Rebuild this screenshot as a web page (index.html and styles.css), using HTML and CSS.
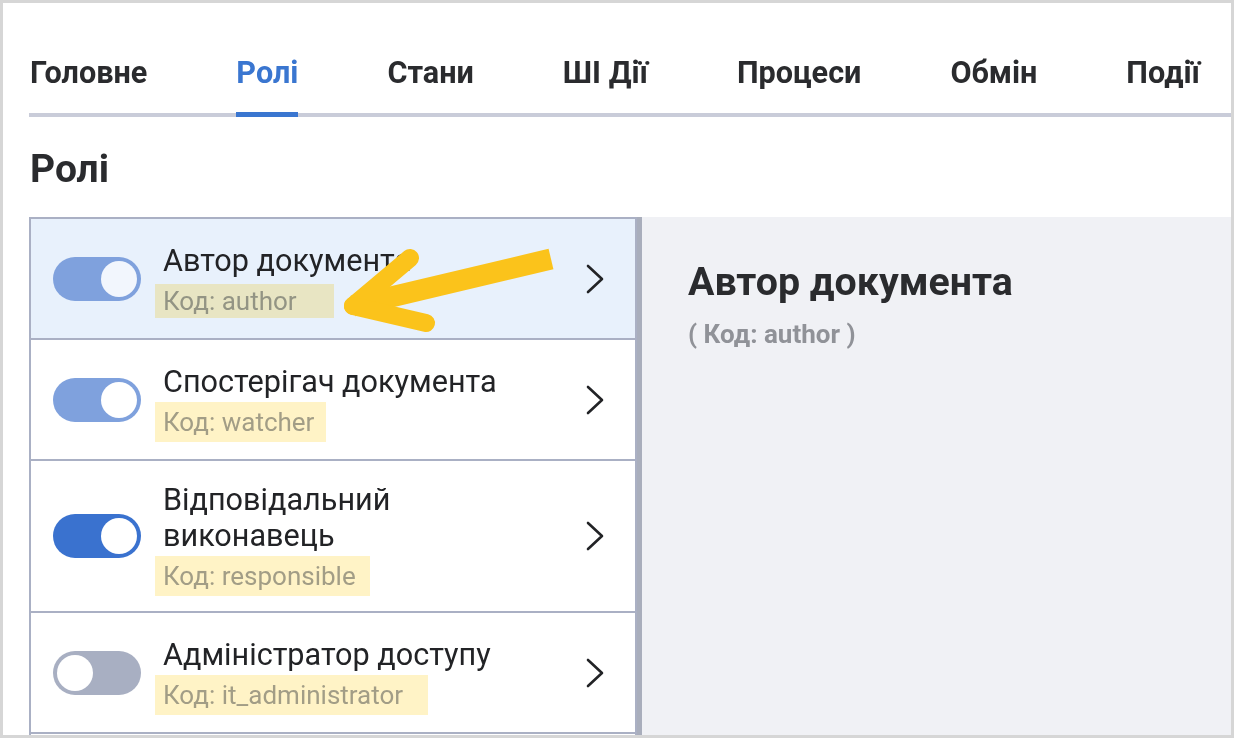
FILE: index.html
```html
<!DOCTYPE html>
<html lang="uk">
<head>
<meta charset="utf-8">
<title>Ролі</title>
<link rel="stylesheet" href="styles.css">
</head>
<body>
<div class="frame">
  <nav class="tabs">
    <div class="tab">Головне</div>
    <div class="tab active">Ролі</div>
    <div class="tab">Стани</div>
    <div class="tab">ШІ Дії</div>
    <div class="tab">Процеси</div>
    <div class="tab">Обмін</div>
    <div class="tab">Події</div>
  </nav>
  <h1 class="heading">Ролі</h1>
  <div class="main">
    <ul class="roles">
      <li class="role selected">
        <span class="toggle on-soft"><span class="knob"></span></span>
        <div class="info">
          <div class="title">Автор документа</div>
          <div class="code"><span class="hl hl-1">Код: author</span></div>
        </div>
        <svg class="chev" viewBox="0 0 20 30"><polyline points="3,2 17,15 3,28"/></svg>
      </li>
      <li class="role">
        <span class="toggle on-soft"><span class="knob"></span></span>
        <div class="info">
          <div class="title">Спостерігач документа</div>
          <div class="code"><span class="hl hl-2">Код: watcher</span></div>
        </div>
        <svg class="chev" viewBox="0 0 20 30"><polyline points="3,2 17,15 3,28"/></svg>
      </li>
      <li class="role tall">
        <span class="toggle on-strong"><span class="knob"></span></span>
        <div class="info">
          <div class="title">Відповідальний<br>виконавець</div>
          <div class="code"><span class="hl hl-3">Код: responsible</span></div>
        </div>
        <svg class="chev" viewBox="0 0 20 30"><polyline points="3,2 17,15 3,28"/></svg>
      </li>
      <li class="role">
        <span class="toggle off"><span class="knob"></span></span>
        <div class="info">
          <div class="title">Адміністратор доступу</div>
          <div class="code"><span class="hl hl-4">Код: it_administrator</span></div>
        </div>
        <svg class="chev" viewBox="0 0 20 30"><polyline points="3,2 17,15 3,28"/></svg>
      </li>
    </ul>
    <section class="detail">
      <h2 class="detail-title">Автор документа</h2>
      <div class="detail-code">( Код: author )</div>
    </section>
  </div>
  <svg class="arrow" viewBox="0 0 1234 738" width="1234" height="738">
    <line x1="353" y1="306" x2="551" y2="259" class="shaft"/>
    <line x1="353" y1="306" x2="410" y2="258" class="barb"/>
    <line x1="353" y1="306" x2="426" y2="323" class="barb"/>
  </svg>
</div>
</body>
</html>
```

FILE: styles.css
```css
* { box-sizing: border-box; }
html, body { margin: 0; padding: 0; }
body {
  font-family: Roboto, "Noto Sans", "Liberation Sans", sans-serif;
  color: #222326;
  background: #fff;
}
.frame {
  position: relative;
  width: 1234px;
  height: 738px;
  border: 3px solid #d6d6d6;
  padding-left: 26px;
  display: flex;
  flex-direction: column;
  overflow: hidden;
}
.tabs {
  display: flex;
  gap: 89px;
  margin-top: 53px;
  padding-left: 1px;
  border-bottom: 4px solid #c9ccd9;
}
.tab {
  font-size: 30.6px;
  font-weight: 700;
  line-height: 34px;
  padding-bottom: 22px;
  border-bottom: 5px solid transparent;
  margin-bottom: -4px;
  color: #2a2b2e;
}
.tab.active {
  color: #3a76d0;
  border-bottom-color: #3a76d0;
}
.heading {
  margin: 30px 0 0 1px;
  font-size: 39px;
  line-height: 44px;
  font-weight: 700;
  color: #2a2b2e;
}
.main {
  display: flex;
  margin-top: 26px;
  flex: 1;
}
.roles {
  list-style: none;
  margin: 0;
  padding: 0;
  width: 608px;
  border: 2px solid #aab0c4;
  border-bottom: none;
}
.role {
  display: flex;
  align-items: center;
  height: 121px;
  padding: 0 30px 0 22px;
  border-bottom: 2px solid #aab0c4;
  background: #fff;
}
.role.tall { height: 152px; }
.role.selected { background: #e8f1fc; }
.toggle {
  flex: none;
  width: 88px;
  height: 44px;
  border-radius: 22px;
  display: flex;
  align-items: center;
  padding: 0 4px;
}
.toggle .knob {
  width: 36px;
  height: 36px;
  border-radius: 50%;
  background: #fff;
}
.toggle.on-soft { background: #7fa1dd; justify-content: flex-end; }
.selected .toggle.on-soft .knob { background: #f2f6fd; }
.toggle.on-strong { background: #3a72cf; justify-content: flex-end; }
.toggle.off { background: #a8afc2; justify-content: flex-start; }
.info {
  flex: 1;
  margin-left: 22px;
}
.title {
  font-size: 30.6px;
  line-height: 36px;
  color: #222326;
}
.code {
  margin-top: 8px;
  font-size: 26px;
  line-height: 28px;
  color: #a29d86;
}
.hl {
  background: #fff3c6;
  mix-blend-mode: multiply;
  padding: 5px 16px 5px 8px;
  margin-left: -8px;
}
.hl-1 { padding: 2px 37px 2px 8px; }
.hl-2 { padding-right: 12px; }
.hl-3 { padding-right: 14px; }
.hl-4 { padding-right: 25px; }
.chev {
  flex: none;
  width: 20px;
  height: 30px;
  fill: none;
  stroke: #222326;
  stroke-width: 2.6;
  stroke-linecap: round;
  stroke-linejoin: round;
}
.detail {
  flex: 1;
  background: #f0f1f5;
  border-left: 5px solid #a9aebc;
  padding: 42px 0 0 46px;
}
.detail-title {
  margin: 0;
  font-size: 39.3px;
  line-height: 46px;
  font-weight: 700;
  color: #2a2b2e;
}
.detail-code {
  margin-top: 14px;
  font-size: 26px;
  line-height: 30px;
  font-weight: 700;
  color: #909298;
}
.arrow {
  position: absolute;
  left: -3px;
  top: -3px;
  pointer-events: none;
}
.arrow line {
  stroke: #fbc31b;
}
.arrow .shaft { stroke-width: 21; stroke-linecap: butt; }
.arrow .barb { stroke-width: 18; stroke-linecap: round; }
```
